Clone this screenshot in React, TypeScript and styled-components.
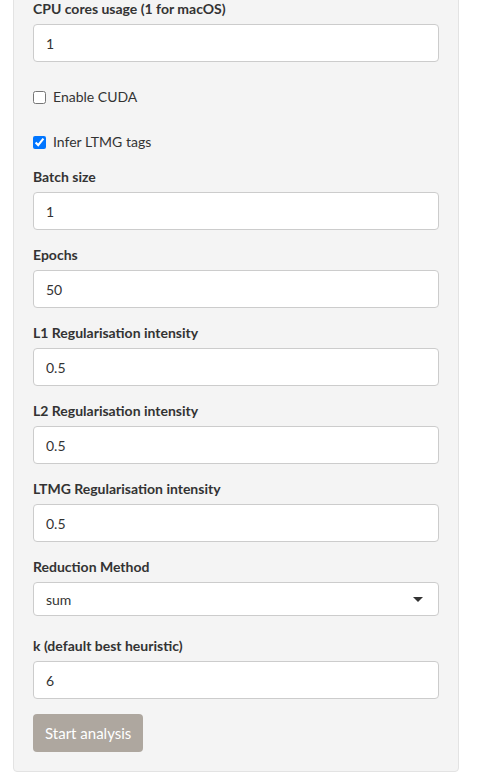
import React from "react";
import styled, { createGlobalStyle } from "styled-components";

const GlobalStyle = createGlobalStyle`
  html, body {
    margin: 0;
    padding: 0;
    background: #ffffff;
    font-family: Lato, "Liberation Sans", sans-serif;
    font-size: 14px;
    color: #333333;
  }
`;

const Well = styled.div`
  box-sizing: border-box;
  width: 446px;
  margin: -21px 0 0 13px;
  padding: 19px;
  background: #f4f4f4;
  border: 1px solid #e3e3e3;
  border-radius: 4px;
`;

const FormGroup = styled.div`
  margin-bottom: 15px;
`;

const CheckGroup = styled.div`
  padding-top: 10px;
  margin-bottom: 15px;
`;

const Label = styled.label`
  display: block;
  font-weight: 700;
  line-height: 20px;
  margin-bottom: 5px;
`;

const TextInput = styled.input`
  box-sizing: border-box;
  display: block;
  width: 100%;
  height: 38px;
  padding: 6px 12px;
  font-family: inherit;
  font-size: 14px;
  color: #333333;
  background: #ffffff;
  border: 1px solid #cccccc;
  border-radius: 4px;
  outline: none;
`;

const CheckRow = styled.label`
  display: flex;
  align-items: center;
  gap: 7px;
  line-height: 20px;
  cursor: pointer;
`;

const Check = styled.input`
  margin: 0;
  width: 13px;
  height: 13px;
  accent-color: #0075ff;
`;

const SelectBox = styled.div`
  box-sizing: border-box;
  display: flex;
  align-items: center;
  justify-content: space-between;
  height: 34px;
  padding: 0 15px 0 12px;
  background: #ffffff;
  border: 1px solid #cccccc;
  border-radius: 4px;
  margin-bottom: 20px;
`;

const Caret = styled.span`
  width: 0;
  height: 0;
  border-left: 5px solid transparent;
  border-right: 5px solid transparent;
  border-top: 5px solid #333333;
`;

const Button = styled.button`
  display: block;
  height: 38px;
  padding: 0 12px;
  font-family: inherit;
  font-size: 15px;
  color: #ffffff;
  background: #aea79f;
  border: none;
  border-radius: 4px;
`;

const fields: { label: string; value: string }[] = [
  { label: "Batch size", value: "1" },
  { label: "Epochs", value: "50" },
  { label: "L1 Regularisation intensity", value: "0.5" },
  { label: "L2 Regularisation intensity", value: "0.5" },
  { label: "LTMG Regularisation intensity", value: "0.5" },
];

const App: React.FC = () => (
  <>
    <GlobalStyle />
    <Well>
      <FormGroup>
        <Label>CPU cores usage (1 for macOS)</Label>
        <TextInput defaultValue="1" />
      </FormGroup>
      <CheckGroup>
        <CheckRow>
          <Check type="checkbox" />
          Enable CUDA
        </CheckRow>
      </CheckGroup>
      <CheckGroup>
        <CheckRow>
          <Check type="checkbox" defaultChecked />
          Infer LTMG tags
        </CheckRow>
      </CheckGroup>
      {fields.map((f) => (
        <FormGroup key={f.label}>
          <Label>{f.label}</Label>
          <TextInput defaultValue={f.value} />
        </FormGroup>
      ))}
      <div>
        <Label>Reduction Method</Label>
        <SelectBox>
          <span>sum</span>
          <Caret />
        </SelectBox>
      </div>
      <FormGroup>
        <Label>k (default best heuristic)</Label>
        <TextInput defaultValue="6" />
      </FormGroup>
      <Button>Start analysis</Button>
    </Well>
  </>
);

export default App;
